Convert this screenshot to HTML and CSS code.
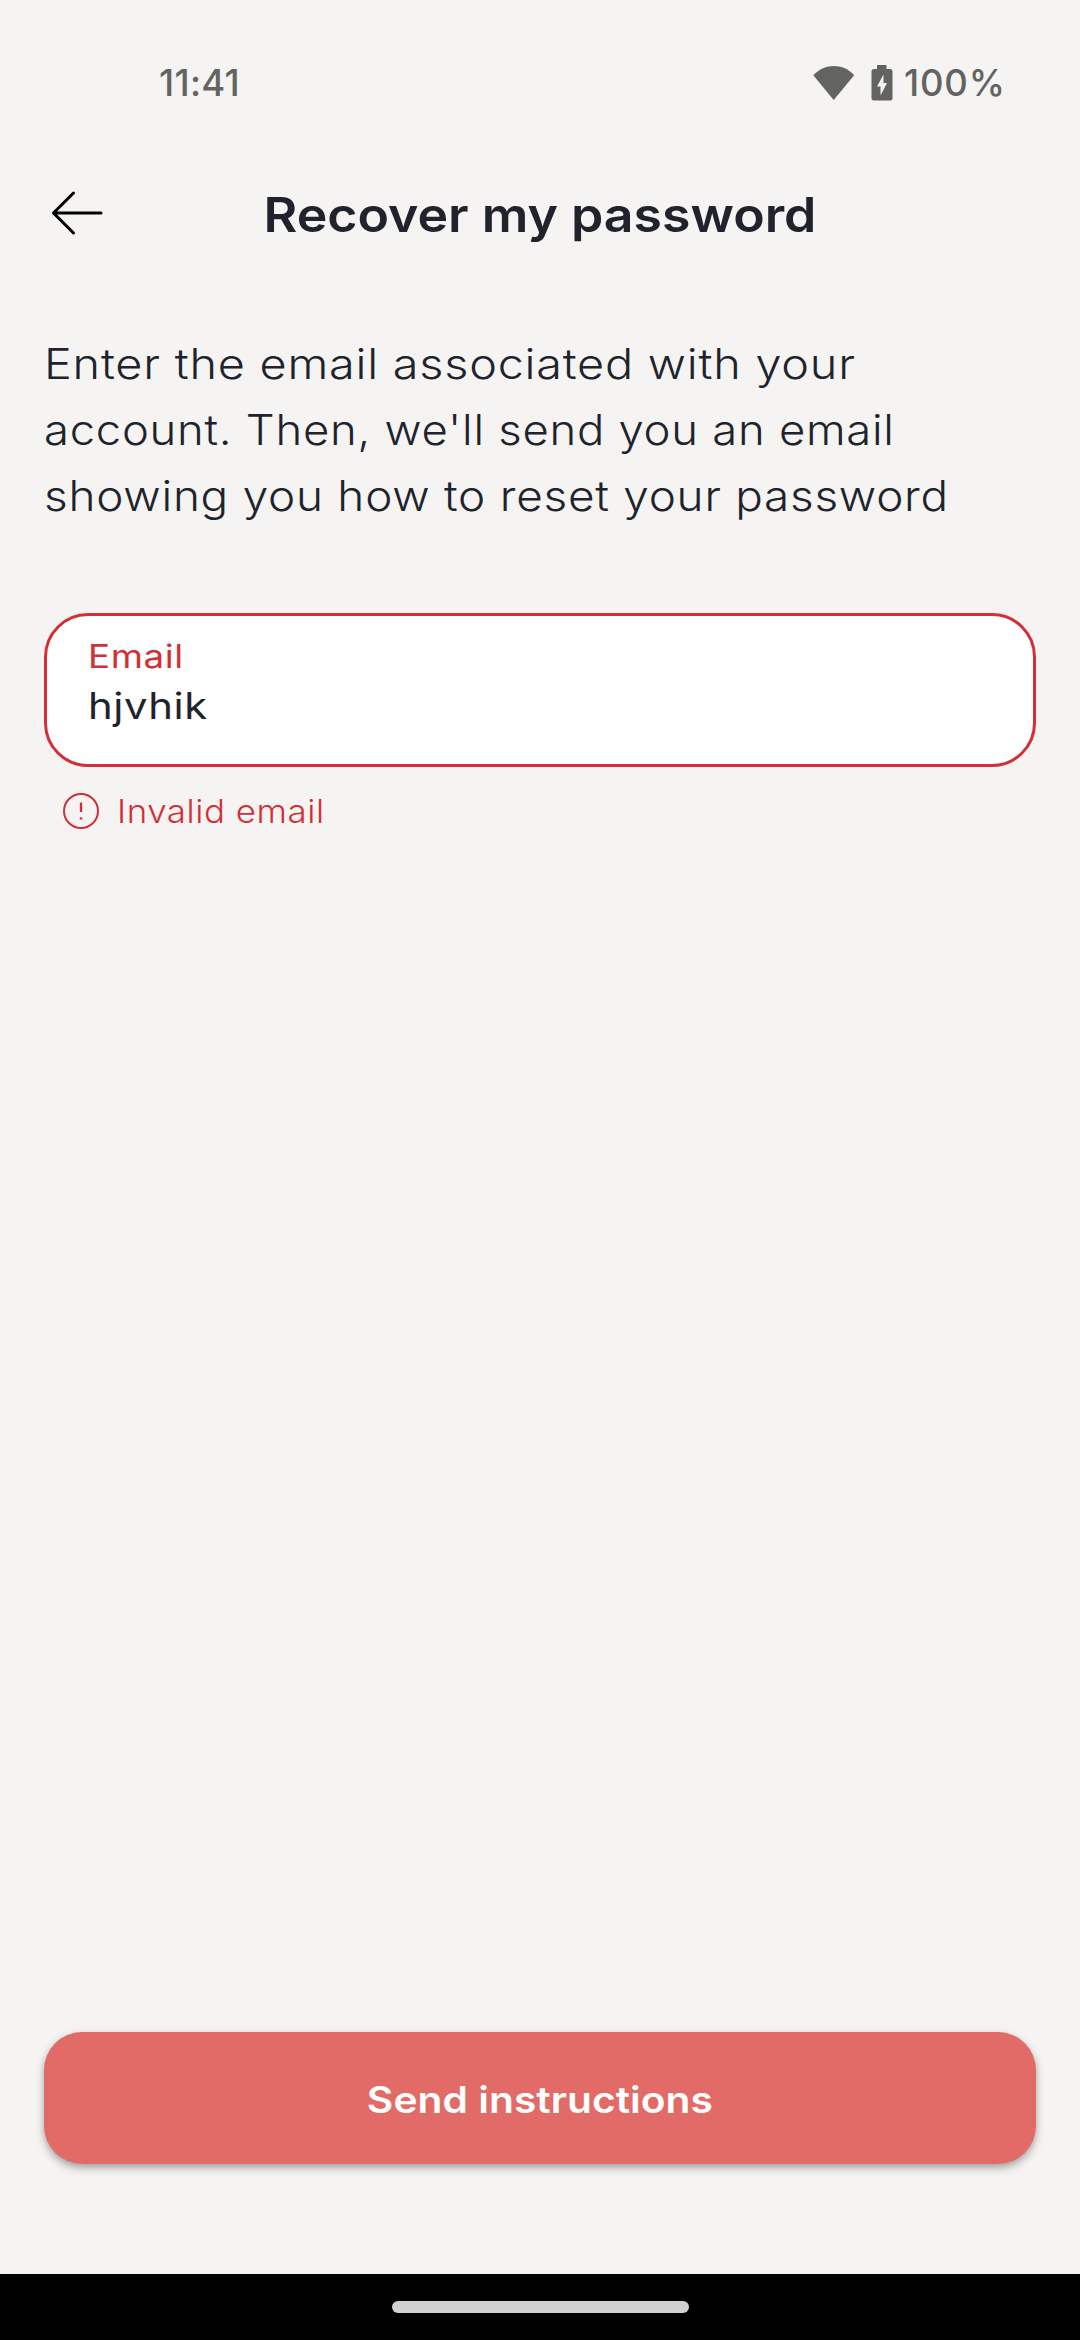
FILE: index.html
```html
<!DOCTYPE html>
<html lang="en">
<head>
<meta charset="utf-8">
<title>Recover my password</title>
<link rel="stylesheet" href="styles.css">
</head>
<body>
<div class="screen">
  <div class="status">
    <span class="clock">11:41</span>
    <div class="indicators">
      <svg class="wifi" width="42" height="36" viewBox="0 0 42 36"><path d="M0.3 10.2C12 -2.1 30 -2.1 41.2 10.2L20.7 35Z" fill="#636361"/></svg>
      <svg class="battery" width="22" height="36" viewBox="0 0 22 36"><path d="M6 0h9.5v4H19a2.5 2.5 0 0 1 2.5 2.500V33a2.500 2.500 0 0 1-2.500 2.500H3A2.500 2.500 0 0 1 .5 33V6.500A2.500 2.500 0 0 1 3 4h3z" fill="#636361"/><path d="M12.500 9.500V18H16L9.500 30.500V21.500H6z" fill="#f5f4f2"/></svg>
      <span class="charge">100%</span>
    </div>
  </div>
  <header class="header">
    <svg class="back" width="52" height="46" viewBox="0 0 52 46" fill="none" stroke="#000" stroke-width="3" stroke-linecap="round" stroke-linejoin="round"><path d="M50 23H2.500M22.500 3L2.500 23L22.500 43"/></svg>
    <h1 class="title">Recover my password</h1>
  </header>
  <main class="content">
    <p class="intro"><span class="line line-1">Enter the email associated with your</span><span class="line line-2">account. Then, we'll send you an email</span><span class="line line-3">showing you how to reset your password</span></p>
    <div class="field">
      <div class="label">Email</div>
      <div class="value">hjvhik</div>
    </div>
    <div class="error">
      <svg width="36" height="36" viewBox="0 0 36 36" fill="none" stroke="#d32f37"><circle cx="18" cy="18" r="17" stroke-width="2"/><path d="M18 9.500V19" stroke-width="2.300"/><path d="M18 24.300V26.500" stroke-width="2.500"/></svg>
      <span class="message">Invalid email</span>
    </div>
    <button class="submit"><span class="caption">Send instructions</span></button>
  </main>
  <div class="nav"><div class="handle"></div></div>
</div>
</body>
</html>
```

FILE: styles.css
```css
* { box-sizing: border-box; }
body { margin: 0; background: #f5f4f2; font-family: "Inter", "Noto Sans", sans-serif; color: #20232c; }
.screen { width: 1080px; height: 2340px; display: flex; flex-direction: column; }
.status { height: 165px; padding: 59px 78px 0 159px; display: flex; justify-content: space-between; align-items: flex-start; font-size: 36.5px; line-height: 48px; font-weight: 500; color: #636361; }
.indicators { display: flex; align-items: flex-start; }
.wifi { margin: 6px 16px 0 0; }
.battery { margin: 6px 11px 0 0; }
.charge { width: 98px; letter-spacing: .8px; white-space: nowrap; }
.clock { letter-spacing: .3px; }
.header { height: 96px; display: grid; grid-template-columns: 58px 1fr 58px; align-items: center; padding: 0 44px; }
.back { margin-left: 7px; }
.title { margin: 4px 0 0; font-size: 48px; line-height: 66px; font-weight: 600; text-align: center; white-space: nowrap; transform: scaleX(1.079); }
.content { flex: 1; display: flex; flex-direction: column; padding: 70px 44px 110px; }
.intro { margin: 0; font-size: 42.5px; line-height: 66px; font-weight: 300; }
.line { display: block; width: max-content; white-space: nowrap; letter-spacing: .7px; transform-origin: 0 50%; }
.line-1 { transform: scaleX(1.101); }
.line-2 { transform: scaleX(1.068); }
.line-3 { transform: scaleX(1.079); }
.field { margin-top: 84px; height: 154px; padding: 18px 41px 0; background: #fff; border: 3px solid #d32f37; border-radius: 44px; }
.label, .value, .message { width: max-content; transform-origin: 0 50%; }
.label { font-size: 32px; line-height: 45px; font-weight: 400; color: #d32f37; letter-spacing: .5px; transform: scaleX(1.15); }
.value { font-size: 37px; line-height: 54px; font-weight: 400; letter-spacing: .5px; transform: scaleX(1.13); }
.error { height: 44px; margin: 22px 0 0 18.500px; display: flex; align-items: center; gap: 18px; font-size: 32px; line-height: 44px; font-weight: 300; color: #d32f37; }
.message { padding-top: 2px; letter-spacing: .5px; transform: scaleX(1.09); }
.submit { margin-top: auto; height: 132px; padding: 3px 0 0; border: 0; border-radius: 38px; background: #e26b67; box-shadow: 0 4px 10px rgba(0,0,0,.28), 0 3px 5px rgba(0,0,0,.08); color: #fff; font: 600 37px/52px "Inter", "Noto Sans", sans-serif; }
.caption { display: inline-block; transform: scaleX(1.103); }
.nav { height: 66px; background: #000; display: flex; align-items: flex-start; justify-content: center; padding-top: 27px; }
.handle { width: 297px; height: 12px; border-radius: 6px; background: #d1d1d1; }
```
